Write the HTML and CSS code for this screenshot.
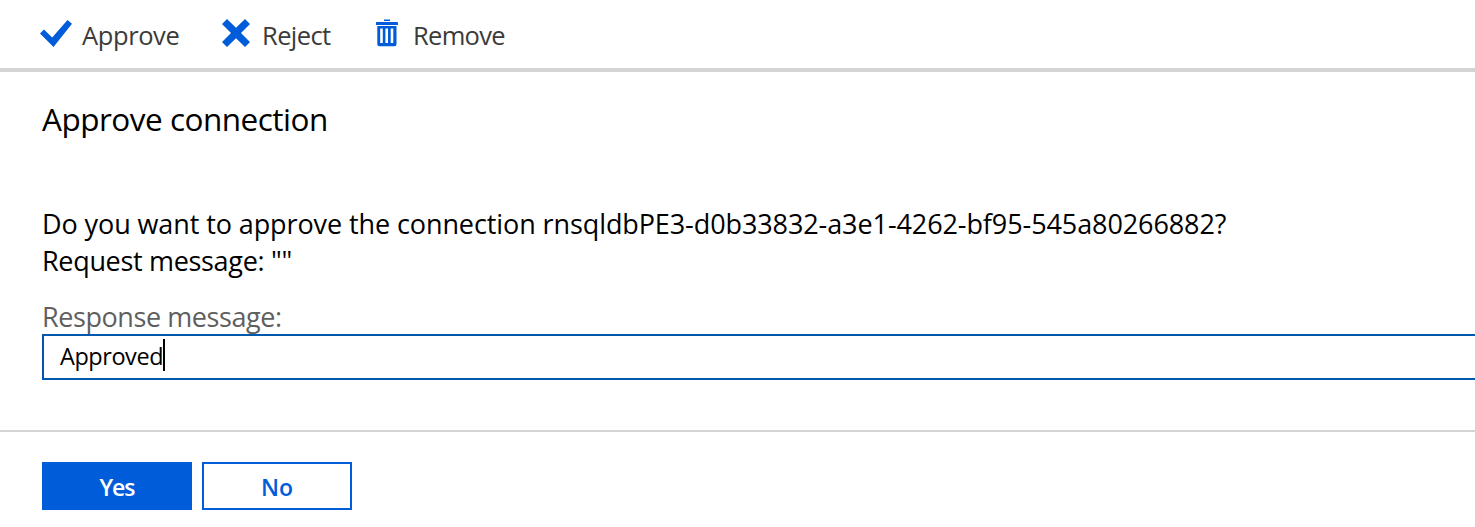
FILE: index.html
```
<!DOCTYPE html>
<html lang="en">
<head>
<meta charset="utf-8">
<title>Approve connection</title>
<link rel="stylesheet" href="styles.css">
</head>
<body>
<nav class="toolbar">
  <button class="command approve"><svg class="icon check" width="34" height="30" viewBox="0 0 34 30"><path d="M1 14.5 5 10.5 13.2 18.5 28.5 1 33 4.8 14.5 28Z"/></svg><span>Approve</span></button>
  <button class="command reject"><svg class="icon cross" width="28" height="28" viewBox="0 0 28 28"><path d="M5 0 14 8.8 23 0 28 5 19 14 28 23 23 28 14 19.2 5 28 0 23 9 14 0 5Z"/></svg><span>Reject</span></button>
  <button class="command remove"><svg class="icon trash" width="22" height="28" viewBox="0 0 22 28"><path fill-rule="evenodd" d="M8 0.5H14V2H8ZM0.5 3H21Q22 3 22 4V6H0V4Q0 3 0.5 3ZM1.3 7H20.5V25Q20.5 27.2 18.5 27.2H3.3Q1.3 27.2 1.3 25ZM4.2 9.5V24H6.8V9.5ZM9.4 9.5V24H12V9.5ZM14.7 9.5V24H17.3V9.5Z"/></svg><span>Remove</span></button>
</nav>
<main class="dialog">
  <h1 class="title">Approve connection</h1>
  <p class="question">Do you want to approve the connection rnsqldbPE3-d0b33832-a3e1-4262-bf95-545a80266882?<br><span class="request">Request message: ""</span></p>
  <div class="label">Response message:</div>
  <div class="field"><span class="value">Approved</span><span class="caret"></span></div>
</main>
<footer class="actions">
  <button class="button primary">Yes</button>
  <button class="button">No</button>
</footer>
</body>
</html>
```
FILE: styles.css
```
* { box-sizing: border-box; }
body {
  margin: 0;
  height: 527px;
  overflow: hidden;
  background: #fff;
  color: #000;
  font-family: "Open Sans", "Noto Sans", sans-serif;
  font-weight: 400;
}
button { font-family: inherit; font-weight: inherit; border: 0; background: none; padding: 0; }
.toolbar {
  display: flex;
  height: 72px;
  padding-left: 39px;
  border-bottom: 4px solid #d4d4d4;
}
.command {
  display: flex;
  align-items: flex-start;
  padding-top: 19px;
  font-size: 25.5px;
  line-height: 32px;
  letter-spacing: -0.4px;
  color: #3b3b3b;
  white-space: nowrap;
}
.icon { flex: none; fill: #015cda; }
.approve { width: 183px; gap: 9px; }
.reject { width: 154px; gap: 12px; letter-spacing: -0.6px; }
.remove { gap: 15px; letter-spacing: -0.7px; }
.title {
  margin: 0;
  font-size: 31.5px;
  font-weight: inherit;
  line-height: 44px;
  letter-spacing: -0.5px;
}
.dialog { height: 358px; padding: 25px 0 0 42px; }
.question {
  margin: 64px 0 0;
  font-size: 27px;
  line-height: 37px;
  letter-spacing: -0.095px;
  white-space: nowrap;
}
.request { letter-spacing: -0.32px; }
.label {
  margin-top: 19px;
  font-size: 27px;
  line-height: 37px;
  letter-spacing: -0.42px;
  color: #5f5f5f;
}
.field {
  display: flex;
  align-items: center;
  width: 1450px;
  height: 46px;
  margin-top: -1px;
  padding-left: 16px;
  border: 2px solid #0058ad;
  font-size: 23.5px;
  line-height: 32px;
}
.value { margin-top: -2px; letter-spacing: -0.45px; }
.caret { width: 2px; height: 32px; margin-top: -4px; background: #000; }
.actions {
  display: flex;
  gap: 10px;
  padding: 30px 0 0 42px;
  border-top: 2px solid #d4d4d4;
}
.button {
  width: 150px;
  height: 48px;
  padding-top: 2px;
  border: 2px solid #015cda;
  color: #015cda;
  font-size: 23px;
  font-weight: 600;
  line-height: 42px;
}
.primary { background: #015cda; color: #fff; letter-spacing: -1px; }
```
